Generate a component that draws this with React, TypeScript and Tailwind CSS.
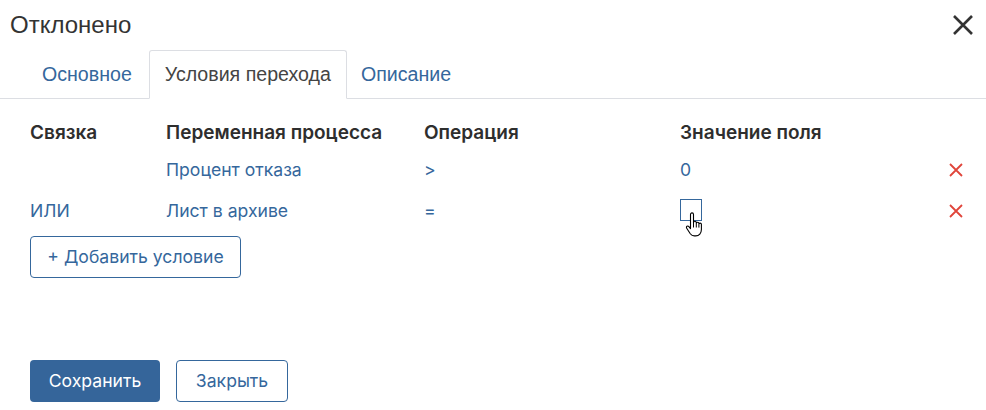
import React from "react";

const Hand = () => (
  <svg width="20" height="26" viewBox="0 0 20 26" className="absolute left-[4px] top-[12px]">
    <path
      d="M5.5 2.5c0-1 .7-1.6 1.5-1.6s1.5.6 1.5 1.6v8.2c0-.9.7-1.4 1.4-1.4s1.4.5 1.4 1.4v.8c0-.8.6-1.3 1.3-1.3s1.3.5 1.3 1.3v.8c0-.7.6-1.2 1.2-1.2s1.3.5 1.3 1.2v5.2c0 3.6-2.3 6.4-5.6 6.4H9.3c-1.7 0-3-.8-4-2.2L1.7 16.2c-.5-.7-.3-1.5.3-1.9.6-.4 1.4-.3 1.9.3l1.6 2V2.5z"
      fill="#fff"
      stroke="#000"
      strokeWidth="1.1"
      strokeLinejoin="round"
    />
    <path d="M8.5 11v4.5M11.3 12v3.5M13.9 12.6v3" stroke="#000" strokeWidth="1" />
  </svg>
);

const RedX = () => (
  <svg width="16" height="16" viewBox="0 0 16 16">
    <path d="M2 2L14 14M14 2L2 14" stroke="#e0453a" strokeWidth="1.8" />
  </svg>
);

export default function App() {
  return (
    <div
      className="w-[986px] h-[410px] bg-white text-[#333] relative overflow-hidden"
      style={{ fontFamily: "Inter, 'Noto Sans', sans-serif" }}
    >
      <div className="flex items-center justify-between h-[50px] pl-[10px] pr-[10px]">
        <div className="text-[24px] text-[#333]" style={{ fontFamily: "'Liberation Sans', Arial, sans-serif" }}>
          Отклонено
        </div>
        <svg width="24" height="24" viewBox="0 0 24 24" className="mr-[1px]">
          <path d="M3 3L21 21M21 3L3 21" stroke="#333" strokeWidth="2.6" />
        </svg>
      </div>

      <div
        className="flex h-[49px] border-b border-[#dcdee3] pl-[27px] text-[19.6px]"
        style={{ fontFamily: "'Liberation Sans', Arial, sans-serif" }}
      >
        <div className="pl-[15px] pr-[17px] flex items-center text-[#35679c] mb-[-1px]">Основное</div>
        <div className="px-[15px] flex items-center text-[#444] bg-white border border-[#dcdee3] border-b-white rounded-t-[3px] mb-[-1px]">
          Условия перехода
        </div>
        <div className="px-[14px] flex items-center text-[#35679c] mb-[-1px]">Описание</div>
      </div>

      <div className="pl-[30px] pr-[22px] text-[17.6px]">
        <div className="flex items-center h-[34px] mt-[17px] font-semibold text-[19px] text-[#2e2e2e]">
          <div className="w-[136px]">Связка</div>
          <div className="w-[258px]">Переменная процесса</div>
          <div className="w-[256px]">Операция</div>
          <div className="flex-1">Значение поля</div>
        </div>
        <div className="flex items-center h-[40px] text-[#35679c]">
          <div className="w-[136px]"></div>
          <div className="w-[258px]">Процент отказа</div>
          <div className="w-[256px]">&gt;</div>
          <div className="flex-1">0</div>
          <RedX />
        </div>
        <div className="flex items-center h-[42px] text-[#35679c]">
          <div className="w-[136px]">ИЛИ</div>
          <div className="w-[258px]">Лист в архиве</div>
          <div className="w-[256px]">=</div>
          <div className="flex-1">
            <div className="relative w-[22px] h-[22px] border border-[#35679c] bg-white mt-[-3px]">
              <Hand />
            </div>
          </div>
          <RedX />
        </div>
        <button className="mt-[4px] h-[42px] w-[211px] border border-[#35679c] rounded-[4px] text-[#35679c] bg-white">
          + Добавить условие
        </button>

        <div className="flex gap-[16px] mt-[82px]">
          <button className="h-[42px] w-[130px] rounded-[4px] bg-[#35659a] text-white">Сохранить</button>
          <button className="h-[42px] w-[112px] rounded-[4px] border border-[#35679c] text-[#35679c] bg-white">
            Закрыть
          </button>
        </div>
      </div>
    </div>
  );
}
